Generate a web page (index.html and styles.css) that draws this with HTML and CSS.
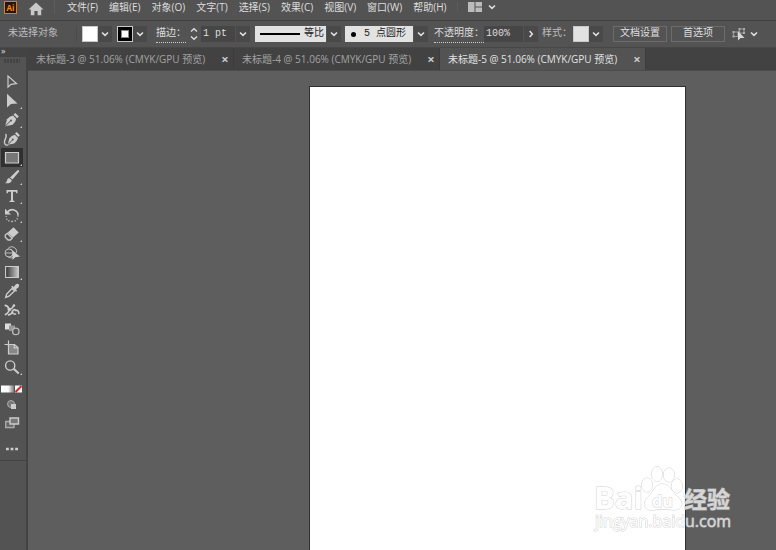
FILE: index.html
```html
<!DOCTYPE html>
<html lang="zh-CN">
<head>
<meta charset="utf-8">
<title>未标题-5</title>
<link rel="stylesheet" href="styles.css">
</head>
<body>
<svg class="defs" aria-hidden="true">
  <symbol id="down" viewBox="0 0 8 8"><path d="M1 2.5 4 5.3 7 2.5" fill="none" stroke="currentColor" stroke-width="1.6"/></symbol>
  <symbol id="right" viewBox="0 0 8 8"><path d="M2.7 1 5.3 4 2.7 7" fill="none" stroke="currentColor" stroke-width="1.6"/></symbol>
</svg>
<div class="app">
  <header class="menubar">
    <span class="logo">Ai</span>
    <button class="home" aria-label="主页"><svg width="16" height="14" viewBox="0 0 16 14"><path d="M8 .5 15.5 7.5H13.2V13.3H9.6V9H6.4V13.3H2.8V7.5H.5Z" fill="currentColor"/></svg></button>
    <nav class="menus">
      <button>文件(F)</button><button>编辑(E)</button><button>对象(O)</button><button>文字(T)</button><button>选择(S)</button><button>效果(C)</button><button>视图(V)</button><button>窗口(W)</button><button>帮助(H)</button>
    </nav>
    <button class="layout" aria-label="排列文档"><svg width="14" height="10" viewBox="0 0 14 10"><path d="M0 0H6.5V10H0ZM7.5 0H14V4.5H7.5ZM7.5 5.5H14V10H7.5Z" fill="#bcbcbc"/></svg><svg class="chev"><use href="#down"/></svg></button>
  </header>

  <div class="controls">
    <span class="state">未选择对象</span>
    <div class="pair"><span class="swatch white"></span><button class="drop" aria-label="填色"><svg class="chev"><use href="#down"/></svg></button></div>
    <div class="pair"><span class="swatch stroke"></span><button class="drop" aria-label="描边颜色"><svg class="chev"><use href="#down"/></svg></button></div>
    <label class="link weight-label" for="weight">描边：</label>
    <div class="pair weight">
      <button class="stepper" aria-label="调整粗细"><svg width="8" height="14" viewBox="0 0 8 14"><path d="M1 4.5 4 1.8 7 4.5M1 9.5 4 12.2 7 9.5" fill="none" stroke="currentColor" stroke-width="1.4"/></svg></button>
      <input id="weight" value="1 pt">
      <button class="drop" aria-label="粗细列表"><svg class="chev"><use href="#down"/></svg></button>
    </div>
    <div class="pair profile">
      <div class="choice"><i class="line"></i><select aria-label="变量宽度配置文件"><option>等比</option></select></div>
      <span class="drop"><svg class="chev"><use href="#down"/></svg></span>
    </div>
    <div class="pair brush">
      <div class="choice"><i class="dot"></i><select aria-label="画笔定义"><option>5 点圆形</option></select></div>
      <span class="drop"><svg class="chev"><use href="#down"/></svg></span>
    </div>
    <label class="link opacity-label" for="opacity">不透明度：</label>
    <div class="pair opacity"><input id="opacity" value="100%"><button class="drop" aria-label="不透明度滑块"><svg class="chev"><use href="#right"/></svg></button></div>
    <span class="style-label">样式：</span>
    <div class="pair style"><span class="swatch pale"></span><button class="drop" aria-label="图形样式"><svg class="chev"><use href="#down"/></svg></button></div>
    <button class="action setup">文档设置</button>
    <button class="action">首选项</button>
    <button class="similar" aria-label="选择类似的对象"><svg width="16" height="14" viewBox="0 0 16 14"><path d="M1.5 5H6V9.5H1.5ZM7.5 2H12V6H7.5Z" fill="none" stroke="#999" stroke-width="1.2"/><path d="M.5 4H2.5V6H.5ZM.5 8.5H2.5V10.5H.5ZM6.5 1H8.5V3H6.5ZM11 1H13V3H11ZM11 5H13V7H11Z" fill="#aaa"/><path d="M6 4V13.5L8.5 11H12.5Z" fill="#d8d8d8"/></svg><svg class="chev"><use href="#down"/></svg></button>
  </div>

  <div class="workspace">
    <aside class="tools">
      <div class="panel-top">»</div>
      <div class="grip"></div>
      <div class="tool-list">
        <button aria-label="选择"><svg viewBox="0 0 18 18"><path d="M5 3V14.2L8 11.3 13.5 10.5Z" fill="none" stroke="#ccc" stroke-width="1.2"/></svg></button>
        <button class="more" aria-label="直接选择"><svg viewBox="0 0 18 18"><path d="M4 1.8V15.5L8 12 14.5 11.5Z" fill="#ccc"/></svg></button>
        <button class="more" aria-label="钢笔"><svg viewBox="0 0 18 18"><path d="M2.2 15.2 4 8.3Q6.5 5.2 10 4.5L13.2 8Q12.5 11.5 9.6 13.7Z" fill="#ccc"/><path d="m10.5 3.5 1.8-1.6 3.5 3.5-1.7 1.8Z" fill="#ccc"/><path d="M2.4 15 7.6 9.8" stroke="#535353"/><circle cx="8" cy="9.5" r="1" fill="#535353"/></svg></button>
        <button aria-label="曲率"><svg viewBox="0 0 18 18"><path d="m4.7 14.8 1.6-6.4Q8.5 5.4 11.8 4.7L15 8Q14 11.5 11.2 13.5Z" fill="#ccc"/><path d="m12 3.5 1.6-1.6 3.3 3.3-1.6 1.8Z" fill="#ccc"/><path d="m5 14.5 4.6-4.7" stroke="#535353"/><circle cx="9.8" cy="9.5" r=".9" fill="#535353"/><path d="M2.5 4C5.5 7-.5 10 2 14.2Q3 15.8 5.3 14.8" fill="none" stroke="#ccc" stroke-width="1.3"/></svg></button>
        <button class="more active" aria-label="矩形"><svg viewBox="0 0 18 18"><path d="M2.5 3.5H15.5V14H2.5Z" fill="#777" stroke="#ccc" stroke-width="1.2"/></svg></button>
        <button class="more" aria-label="画笔"><svg viewBox="0 0 18 18"><path d="M15.7 2.2Q16.6 3 15.8 4L9.5 11.5 7 9.4 14.2 2.5Q15 1.5 15.7 2.2Z" fill="#ccc"/><path d="M6.3 10 8.8 12.2Q8.3 16 2 15.2Q4 14 4 12.2 4.3 10.2 6.3 10Z" fill="#ccc"/></svg></button>
        <button class="more" aria-label="文字"><svg viewBox="0 0 18 18"><path d="M3.5 3H14.5V6.3H13.3L12.7 4.7H10V13.4L11.5 14V15H6.5V14L8 13.4V4.7H5.3L4.7 6.3H3.5Z" fill="#ccc"/></svg></button>
        <button class="more" aria-label="旋转"><svg viewBox="0 0 18 18"><path d="M4 6.5Q7 2.7 11 4T15 9" fill="none" stroke="#ccc" stroke-width="1.6"/><path d="M15 9Q15 15.5 9 15.5T3.2 10" fill="none" stroke="#bbb" stroke-width="1.3" stroke-dasharray="1.5 1.5"/><path d="M2 2.8V8.5H8Z" fill="#ccc"/></svg></button>
        <button class="more" aria-label="橡皮擦"><svg viewBox="0 0 18 18"><path d="m10.5 2.3 5.2 5.2-5.8 5.3-5.3-5.2Z" fill="#ccc"/><path d="M4.3 8.3 9.2 13.2 7.3 15H5L2.3 12.2V10Z" fill="none" stroke="#ccc" stroke-width="1.3"/></svg></button>
        <button aria-label="形状生成器"><svg viewBox="0 0 18 18"><circle cx="6" cy="9" r="4" fill="none" stroke="#bbb"/><path d="M4.5 5Q8 1 12 4Q15 6 13 9M2 9H9M5 13Q9 15 10 13M7 5Q12 7 9 12" fill="none" stroke="#bbb"/><path d="M9.5 6.5V16L12.3 13.2 17 12.5Z" fill="#d0d0d0"/></svg></button>
        <button class="more" aria-label="渐变"><svg viewBox="0 0 18 18"><defs><linearGradient id="g"><stop stop-color="#333"/><stop offset="1" stop-color="#ccc"/></linearGradient></defs><path d="M2.6 3.5H15.4V14.5H2.6Z" fill="url(#g)" stroke="#ccc" stroke-width="1.1"/></svg></button>
        <button aria-label="吸管"><svg viewBox="0 0 18 18"><path d="M9 6.5 3.7 12 2.7 15.3 6 14.2 11.5 9Z" fill="none" stroke="#ccc" stroke-width="1.4"/><path d="m8.2 4.8 1.1-1 1.4 1.1 2-2.4Q14.5 1 15.7 2.3T15.4 5.4L13 7.3 14.1 8.7 13 9.8Z" fill="#ccc"/></svg></button>
        <button aria-label="操控变形"><svg viewBox="0 0 18 18"><path d="M2.3 4.3Q4.8 4.8 6 8Q9 8.5 10.8 4.5M6 8Q6.5 11 2.5 13.5M5.5 13.8Q8.5 13.5 9.5 10.5T13 9.5Q15.5 8.5 15.8 12.5M9.3 10Q9.5 13.5 12.5 13" fill="none" stroke="#ccc" stroke-width="1.7" stroke-linecap="round"/><circle cx="6.3" cy="8.5" r="1.8" fill="#ccc"/><circle cx="11" cy="4.5" r="1.2" fill="#ccc"/></svg></button>
        <button aria-label="混合"><svg viewBox="0 0 18 18"><path d="M2 3.5H8V9.5H2Z" fill="#ddd"/><path d="M6 5.5H12V11H6Z" fill="#999"/><circle cx="12.8" cy="11.4" r="3.2" fill="#555" stroke="#bbb" stroke-width="1.3"/></svg></button>
        <button aria-label="画板"><svg viewBox="0 0 18 18"><path d="M5.5 5.5H11.5L15 8.5V15H5.5Z" fill="#888" stroke="#ccc" stroke-width="1.2"/><path d="M5.5 1.5V8M1.5 5.5H8M11.2 5.7V8.8H15" fill="none" stroke="#ccc" stroke-width="1.2"/></svg></button>
        <button class="more" aria-label="缩放"><svg viewBox="0 0 18 18"><circle cx="7.2" cy="7.5" r="4.6" fill="none" stroke="#ccc" stroke-width="1.4"/><path d="m10.7 10.8 5 4.6" stroke="#ccc" stroke-width="2.1"/></svg></button>
      </div>
      <div class="modes">
        <button aria-label="颜色"><svg width="24" height="10" viewBox="0 0 24 10"><defs><linearGradient id="m"><stop stop-color="#fff"/><stop offset="1" stop-color="#777"/></linearGradient></defs><path d="M1 1.5H8V8.5H1Z" fill="#fff"/><path d="M8 1.5H14V8.5H8Z" fill="url(#m)"/><path d="M15 1.5H22V8.5H15Z" fill="#fff"/><path d="m15.5 8 6-6" stroke="#e02020" stroke-width="2"/></svg></button>
        <button aria-label="绘图模式"><svg width="12" height="12" viewBox="0 0 12 12"><circle cx="5" cy="5" r="3.5" fill="#777" stroke="#aaa"/><path d="M5 5H10V10H5Z" fill="#ccc"/></svg></button>
        <button class="screen" aria-label="屏幕模式"><svg width="16" height="14" viewBox="0 0 16 14"><path d="M1.7 5.5H10V11.5H1.7Z" fill="#666" stroke="#aaa" stroke-width="1.4"/><path d="M6 2H14.5V8H6Z" fill="#777" stroke="#ccc" stroke-width="1.4"/></svg></button>
        <button class="dots" aria-label="编辑工具栏"><svg width="12" height="4" viewBox="0 0 12 4"><path d="M0 .7H2.8V3.3H0ZM4.6.7H7.4V3.3H4.6ZM9.2.7H12V3.3H9.2Z" fill="#ccc"/></svg></button>
      </div>
    </aside>
    <main class="document">
      <div class="tabs">
        <div class="tab"><a href="#art">未标题-3 @ 51.06% (CMYK/GPU 预览)</a><button aria-label="关闭">×</button></div>
        <div class="tab"><a href="#art">未标题-4 @ 51.06% (CMYK/GPU 预览)</a><button aria-label="关闭">×</button></div>
        <div class="tab current"><a href="#art">未标题-5 @ 51.06% (CMYK/GPU 预览)</a><button aria-label="关闭">×</button></div>
      </div>
      <div class="canvas">
        <div class="artboard" id="art"></div>
        <svg class="watermark" width="144" height="72" viewBox="0 0 144 72">
          <g class="mark">
            <text class="brand" x="2" y="43">Bai</text>
            <ellipse cx="55" cy="19" rx="5.5" ry="7"/><ellipse cx="65" cy="8" rx="5.3" ry="7.5"/><ellipse cx="77" cy="9" rx="5.5" ry="7"/><ellipse cx="85" cy="20" rx="5.5" ry="7"/>
            <path d="M70 18C78 18 80 26 86 31C92 36 91 44 82 44Q70 42 61 44C51 45 50 36 57 30C62 25 63 18 70 18Z"/>
            <text class="du" x="60" y="41">du</text>
            <text class="jy" x="92" y="42">经验</text>
            <text class="url" x="3" y="61">jingyan.baidu.com</text>
          </g>
        </svg>
      </div>
    </main>
  </div>
</div>
</body>
</html>
```
FILE: styles.css
```css
* { box-sizing: border-box; }
body { margin: 0; background: #5e5e5e; color: #dedede; font: 10px/14px "Open Sans", "Noto Sans CJK SC", sans-serif; }
button, input, select { margin: 0; padding: 0; border: 0; background: none; color: inherit; font: inherit; border-radius: 0; }
button { display: flex; align-items: center; justify-content: center; white-space: nowrap; }
.defs { position: absolute; width: 0; height: 0; }
.app { display: flex; flex-direction: column; height: 100vh; overflow: hidden; }
.chev { width: 8px; height: 8px; flex: none; }

.menubar { display: flex; align-items: center; height: 21px; padding: 0 4px 6px; background: #535353; border-bottom: 1px solid #404040; flex: none; }
.logo { width: 13px; height: 13px; border: 1px solid #d97f22; background: #291602; color: #f08a1c; font-weight: 700; font-size: 8px; line-height: 11px; text-align: center; }
.home { margin: 3px 0 0 11px; color: #c8c8c8; }
.menus { display: flex; gap: 11px; margin-left: 10px; padding-left: 12px; border-left: 1px solid #5c5c5c; }
.layout { gap: 6px; margin-left: 10px; padding-left: 10px; border-left: 1px solid #5c5c5c; }

.controls { display: flex; align-items: center; height: 27px; padding: 0 8px; background: #535353; border-bottom: 1px solid #474747; white-space: nowrap; flex: none; font-family: "Liberation Mono", "Noto Sans CJK SC", monospace; line-height: 16px; }
.controls > * { flex: none; }
.state { width: 69px; color: #bdbdbd; border-right: 1px solid #4b4b4b; }
.pair { display: flex; align-items: center; height: 16px; margin-left: 5px; }
.drop { display: flex; align-items: center; justify-content: center; width: 14px; height: 16px; background: #494949; }
.swatch { width: 16px; height: 16px; border: 1px solid #c8c8c8; }
.white { background: #fff; }
.pale { background: #e2e2e2; }
.stroke { display: grid; place-items: center; background: #000; }
.stroke::after { content: ""; width: 6px; height: 6px; background: #fff; border: 1px solid #888; }
.link { border-bottom: 1px dotted #ccc; }
.weight-label { margin-left: 9px; }
.weight, .style { margin-left: 1px; }
.stepper { width: 13px; height: 16px; }
input { height: 16px; background: #464646; min-width: 0; }
#weight { width: 34px; margin: 0 1px; padding-left: 2px; }
.choice { display: flex; align-items: center; height: 16px; margin-right: 1px; background: #e2e2e2; color: #222; }
select { appearance: none; height: 16px; flex: 1; min-width: 0; }
.profile .choice { width: 71px; padding-left: 5px; gap: 4px; }
.line { width: 40px; height: 2px; background: #000; }
.brush { margin-left: 4px; }
.brush .choice { width: 68px; padding-left: 6px; gap: 8px; }
.dot { width: 5px; height: 5px; border-radius: 50%; background: #000; }
.opacity-label { margin-left: 6px; }
.opacity { margin-left: 0; }
#opacity { width: 39px; margin-right: 1px; padding-left: 2px; }
.style-label { margin-left: 4px; color: #bdbdbd; }
.action { width: 54px; height: 16px; margin-left: 4px; border: 1px solid #6c6c6c; }
.setup { margin-left: 10px; }
.similar { gap: 2px; margin-left: 7px; }

.workspace { display: flex; flex: 1; min-height: 0; }
.tools { width: 28px; flex: none; background: #535353; border-right: 2px solid #434343; }
.panel-top { height: 9px; padding-left: 1px; background: #434343; font-size: 9px; line-height: 6px; }
.grip { width: 16px; height: 4px; margin: 2px 0 9px 4px; background: repeating-linear-gradient(90deg, #434343 0 2px, #535353 2px 3px); }
.tool-list { display: flex; flex-direction: column; }
.tool-list button { position: relative; width: 22px; height: 19px; margin-left: 1px; }
.tool-list svg { width: 18px; height: 18px; }
.tool-list .active { background: #303030; }
.more::after { content: ""; position: absolute; right: 1px; bottom: 1px; border: 1px solid #ccc; border-top-color: transparent; border-left-color: transparent; }
.modes { display: flex; flex-direction: column; align-items: center; gap: 5px; padding: 8px 2px 9px 0; border-bottom: 1px solid #444; }
.dots { margin: 12px 0 0; }

.document { display: flex; flex-direction: column; flex: 1; min-width: 0; }
.tabs { display: flex; height: 23px; background: #424242; border-bottom: 1px solid #4c4c4c; flex: none; }
.tab { display: flex; align-items: center; justify-content: space-between; width: 206px; padding: 0 2px 0 8px; border-right: 1px solid #3c3c3c; color: #a2a2a2; }
.tab a { color: inherit; text-decoration: none; white-space: nowrap; }
.tab button { width: 12px; font-size: 13px; font-weight: 700; color: #c8c8c8; }
.tab.current { background: #535353; color: #e2e2e2; }
.canvas { position: relative; display: flex; flex: 1; min-height: 0; padding-top: 15px; overflow: hidden; }
.artboard { width: 50.5%; margin-left: 37.5%; background: #fff; border: 1px solid #303030; border-bottom: 0; }
.watermark { position: absolute; right: 40px; bottom: 12px; overflow: visible; }
.mark { fill: #fff; stroke: #c4c4c4; stroke-width: 1; paint-order: stroke; opacity: .75; }
.brand { font: 700 31px "Open Sans", sans-serif; }
.du { font: 700 16px "Open Sans", sans-serif; }
.jy { font: 700 23px "Noto Sans CJK SC", sans-serif; }
.url { font: 500 16px "Open Sans", sans-serif; }
```
